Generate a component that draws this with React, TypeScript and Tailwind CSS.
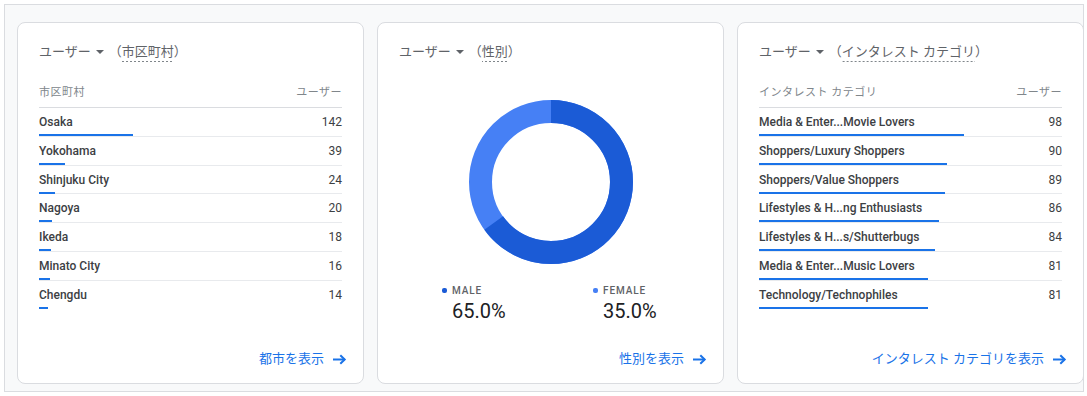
import React from "react";

const cities: [string, number][] = [
  ["Osaka", 142],
  ["Yokohama", 39],
  ["Shinjuku City", 24],
  ["Nagoya", 20],
  ["Ikeda", 18],
  ["Minato City", 16],
  ["Chengdu", 14],
];

const interests: [string, number][] = [
  ["Media & Enter...Movie Lovers", 98],
  ["Shoppers/Luxury Shoppers", 90],
  ["Shoppers/Value Shoppers", 89],
  ["Lifestyles & H...ng Enthusiasts", 86],
  ["Lifestyles & H...s/Shutterbugs", 84],
  ["Media & Enter...Music Lovers", 81],
  ["Technology/Technophiles", 81],
];

function Title({ dim }: { dim: string }) {
  return (
    <div className="h-[20px] flex items-center text-[13px] leading-[20px] text-[#5f6368] whitespace-nowrap">
      <span>ユーザー</span>
      <svg className="ml-[5px] block" width="8" height="4" viewBox="0 0 8 4">
        <path d="M0 0h8L4 4z" fill="#5f6368" />
      </svg>
      <span className="ml-[5px]">
        （
        <span className="pb-[3px] bg-[linear-gradient(to_right,#80868b_60%,transparent_0)] bg-[length:4px_1px] bg-repeat-x bg-bottom">
          {dim}
        </span>
        ）
      </span>
    </div>
  );
}

function Arrow() {
  return (
    <svg className="ml-[8px] block" width="15" height="11" viewBox="0 0 15 11" fill="none">
      <path d="M1 5.5h12" stroke="#1a73e8" strokeWidth="2" />
      <path d="M8.3 1.2l4.4 4.3-4.4 4.3" stroke="#1a73e8" strokeWidth="2" />
    </svg>
  );
}

function Link({ label }: { label: string }) {
  return (
    <div className="mt-auto mb-[14px] -mr-[5px] h-[20px] flex justify-end items-center text-[13px] text-[#1a73e8] whitespace-nowrap">
      <span>{label}</span>
      <Arrow />
    </div>
  );
}

function Table({ head, data, scale }: { head: string; data: [string, number][]; scale: number }) {
  return (
    <div>
      <div className="mt-[17px] h-[29px] flex items-center justify-between border-b border-[#dadce0] text-[11px] tracking-[0.5px] text-[#80868b]">
        <span>{head}</span>
        <span>ユーザー</span>
      </div>
      {data.map(([label, v], i) => (
        <div
          key={label + i}
          className={i < data.length - 1 ? "h-[28.8px] pt-[4px] border-b border-[#e8eaed]" : "h-[28.8px] pt-[4px]"}
        >
          <div className="h-[20px] flex items-center justify-between text-[12px] text-[#3c4043]">
            <span className="font-medium">{label}</span>
            <span>{v}</span>
          </div>
          <div className="mt-[2px] h-[2px] bg-[#1a73e8]" style={{ width: `${(v / scale) * 100}%` }} />
        </div>
      ))}
    </div>
  );
}

function Card({ children }: { children: React.ReactNode }) {
  return (
    <div className="w-[347px] h-[362px] shrink-0 bg-white border border-[#dadce0] rounded-[8px] flex flex-col pt-[19px] px-[21px]">
      {children}
    </div>
  );
}

const C = 2 * Math.PI * 70.5;

export default function App() {
  return (
    <div className="p-[4px] bg-white font-[Roboto,'Noto_Sans_CJK_JP',sans-serif]">
      <div className="w-[1080px] h-[388px] border border-[#dadce0] bg-[#f8f9fa] overflow-hidden pt-[17px] pl-[12px] flex gap-[13px]">
        <Card>
          <Title dim="市区町村" />
          <Table head="市区町村" data={cities} scale={456} />
          <Link label="都市を表示" />
        </Card>
        <Card>
          <Title dim="性別" />
          <svg className="mt-[38px] mx-auto block" width="164" height="164" viewBox="0 0 164 164">
            <circle cx="82" cy="82" r="70.5" fill="none" stroke="#4680f5" strokeWidth="23" />
            <circle
              cx="82"
              cy="82"
              r="70.5"
              fill="none"
              stroke="#1b5bd6"
              strokeWidth="23"
              strokeDasharray={`${0.65 * C} ${C}`}
              transform="rotate(-90 82 82)"
            />
          </svg>
          <div className="mt-[19px] flex pl-[43px]">
            <div className="w-[151px]">
              <div className="h-[14px] flex items-center text-[10px] font-medium tracking-[0.9px] text-[#5f6368]">
                <span className="w-[5px] h-[5px] rounded-[2px] bg-[#1b5bd6] mr-[5px]" />
                MALE
              </div>
              <div className="mt-[2px] h-[24px] leading-[24px] pl-[10px] text-[20px] text-[#202124]">65.0%</div>
            </div>
            <div>
              <div className="h-[14px] flex items-center text-[10px] font-medium tracking-[0.9px] text-[#5f6368]">
                <span className="w-[5px] h-[5px] rounded-[2px] bg-[#4680f5] mr-[5px]" />
                FEMALE
              </div>
              <div className="mt-[2px] h-[24px] leading-[24px] pl-[10px] text-[20px] text-[#202124]">35.0%</div>
            </div>
          </div>
          <Link label="性別を表示" />
        </Card>
        <Card>
          <Title dim="インタレスト カテゴリ" />
          <Table head="インタレスト カテゴリ" data={interests} scale={145} />
          <Link label="インタレスト カテゴリを表示" />
        </Card>
      </div>
    </div>
  );
}
